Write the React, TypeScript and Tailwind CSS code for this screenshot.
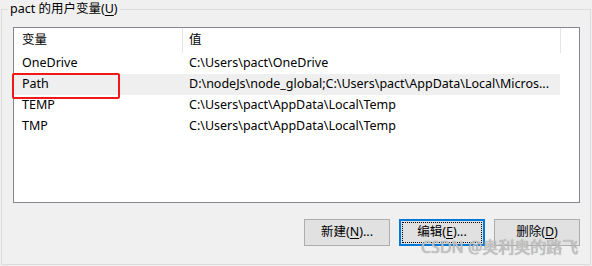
import React from "react";

interface EnvRow {
  name: string;
  value: string;
  selected?: boolean;
}

const rows: EnvRow[] = [
  { name: "OneDrive", value: "C:\\Users\\pact\\OneDrive" },
  {
    name: "Path",
    value: "D:\\nodeJs\\node_global;C:\\Users\\pact\\AppData\\Local\\Micros...",
    selected: true,
  },
  { name: "TEMP", value: "C:\\Users\\pact\\AppData\\Local\\Temp" },
  { name: "TMP", value: "C:\\Users\\pact\\AppData\\Local\\Temp" },
];

const font = { fontFamily: '"Noto Sans", "Noto Sans CJK SC", sans-serif' };

function WinButton({
  label,
  hotkey,
  suffix,
  focused,
}: {
  label: string;
  hotkey: string;
  suffix: string;
  focused?: boolean;
}) {
  return (
    <button
      className={
        focused
          ? "w-[86px] h-[27px] bg-[#e1e1e1] border-2 border-[#0078d7] p-px flex"
          : "w-[86px] h-[27px] bg-[#e1e1e1] border border-[#adadad] flex"
      }
    >
      <span
        className={
          focused
            ? "flex-1 flex items-center justify-center border border-dotted border-black text-[12.5px] text-black leading-none"
            : "flex-1 flex items-center justify-center text-[12.5px] text-black leading-none"
        }
      >
        {label}(<span className="underline underline-offset-2">{hotkey}</span>){suffix}
      </span>
    </button>
  );
}

export default function App() {
  return (
    <div className="w-[592px] h-[266px] bg-[#f0f0f0] overflow-hidden relative" style={font}>
      <div className="ml-px mt-[9px] w-[590px] h-[256px] border border-[#dcdcdc] relative">
        <div className="absolute -top-[10px] left-[6px] px-[2px] bg-[#f0f0f0] text-[12.5px] leading-[17px] text-black">
          pact 的用户变量(<span className="underline underline-offset-2">U</span>)
        </div>

        <div className="ml-[11px] mt-[17px] w-[567px] h-[176px] border border-[#828790] bg-white relative">
          <div className="flex h-[25px] items-center text-[12.5px] text-black">
            <div className="w-[168px] h-full pl-2 flex items-center">变量</div>
            <div className="w-px h-full bg-[#e5e5e5]" />
            <div className="w-[377px] h-full pl-[6px] flex items-center">值</div>
            <div className="w-px h-full bg-[#e5e5e5]" />
          </div>
          {rows.map((r) => (
            <div
              key={r.name}
              className={
                r.selected
                  ? "flex w-[546px] h-[21px] items-center text-[12.5px] text-black bg-[#efefef]"
                  : "flex w-[546px] h-[21px] items-center text-[12.5px] text-black"
              }
            >
              <div className="w-[169px] pl-2 whitespace-nowrap">{r.name}</div>
              <div className="flex-1 pl-[6px] whitespace-nowrap overflow-hidden">{r.value}</div>
            </div>
          ))}
          {/* red annotation box around the Path row */}
          <div className="absolute left-[-2px] top-[45px] w-[108px] h-[26px] border-2 border-[#f01818] rounded-[2px]" />
        </div>

        <div className="mt-[16px] ml-[11px] w-[567px] flex justify-end gap-[9px]">
          <WinButton label="新建" hotkey="N" suffix="..." />
          <WinButton label="编辑" hotkey="E" suffix="..." focused />
          <WinButton label="删除" hotkey="D" suffix="" />
        </div>
      </div>

      <div
        className="absolute left-[421px] top-[237px] text-[16px] leading-[20px] text-[#c4c4c4] whitespace-nowrap"
        style={{ textShadow: "0 0 1px #8a8a8a" }}
      >
        CSDN @奥利奥的路飞
      </div>
    </div>
  );
}
